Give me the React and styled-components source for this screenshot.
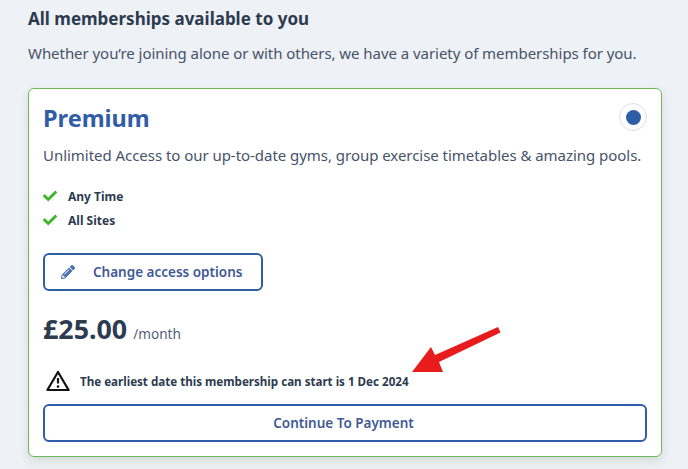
import styled, { createGlobalStyle } from "styled-components"
import { FaCheck, FaPencilAlt } from "react-icons/fa"

const GlobalStyle = createGlobalStyle`
    html, body {
        margin: 0;
        padding: 0;
        height: 100%;
        background: #eef1f5;
        overflow: hidden;
    }
    body {
        font-family: "Noto Sans", "Open Sans", sans-serif;
        color: #2f3e55;
    }
`
const Page = styled.div`
    position: relative;
    width: 688px;
    height: 469px;
    padding: 9px 26px 0 28px;
    box-sizing: border-box;
`
const Heading = styled.h2`
    margin: 0;
    font-size: 17px;
    line-height: 20px;
    font-weight: 700;
    color: #2d3b50;
`
const Intro = styled.p`
    margin: 14px 0 0;
    font-size: 15px;
    line-height: 21px;
    letter-spacing: -0.05px;
    color: #46536a;
`
const Card = styled.div`
    margin-top: 24px;
    height: 369px;
    box-sizing: border-box;
    padding: 14px 14px 0;
    background: #fff;
    border: 1.5px solid #6fba58;
    border-radius: 6px;
    box-shadow: 0 4px 10px rgba(60, 110, 70, 0.16);
`
const CardTop = styled.div`
    display: flex;
    justify-content: space-between;
    align-items: flex-start;
`
const Title = styled.h3`
    margin: 0;
    font-size: 23.5px;
    line-height: 30px;
    font-weight: 700;
    color: #2f5da6;
`
const Radio = styled.span`
    display: flex;
    align-items: center;
    justify-content: center;
    width: 28px;
    height: 28px;
    box-sizing: border-box;
    border: 1px solid #dcdfe6;
    border-radius: 50%;
    &::after {
        content: "";
        width: 15px;
        height: 15px;
        border-radius: 50%;
        background: #2f5da6;
    }
`
const Description = styled.p`
    margin: 12px 0 0;
    font-size: 15px;
    line-height: 21px;
    letter-spacing: -0.04px;
    color: #46536a;
`
const Features = styled.ul`
    list-style: none;
    margin: 21px 0 0;
    padding: 0;
    display: flex;
    flex-direction: column;
    gap: 6px;
`
const Feature = styled.li`
    display: flex;
    align-items: center;
    gap: 11px;
    height: 18px;
    font-size: 12px;
    font-weight: 700;
    color: #2d3b50;
    svg {
        width: 14px;
        height: 14px;
        color: #3cb527;
    }
`
const OutlineButton = styled.button`
    display: flex;
    align-items: center;
    justify-content: ${(p) => (p.$wide ? "center" : "flex-start")};
    width: ${(p) => (p.$wide ? "100%" : "220px")};
    height: 38px;
    padding: ${(p) => (p.$wide ? "0 3px 0 0" : "0 0 0 16px")};
    margin-top: ${(p) => p.$top}px;
    background: #fff;
    border: 2px solid #2f5da6;
    border-radius: 6px;
    font-family: inherit;
    font-size: 13.5px;
    font-weight: 600;
    color: #3f5a94;
    svg {
        width: 14px;
        height: 14px;
        margin-right: 18px;
        color: #4a70b0;
    }
`
const PriceRow = styled.div`
    display: flex;
    align-items: baseline;
    gap: 6px;
    margin-top: 21px;
`
const Price = styled.span`
    font-size: 26.8px;
    line-height: 34px;
    font-weight: 700;
    color: #2d3b50;
`
const Period = styled.span`
    font-size: 13.6px;
    color: #55617a;
`
const Notice = styled.div`
    display: flex;
    align-items: center;
    gap: 10px;
    margin: 24px 0 0 3px;
    height: 22px;
    font-size: 11.6px;
    font-weight: 700;
    color: #2d3b50;
`
const Arrow = styled.svg`
    position: absolute;
    left: 400px;
    top: 320px;
    width: 110px;
    height: 70px;
`

const WarningIcon = () => (
    <svg width="24" height="22" viewBox="0 0 24 22" fill="none">
        <path d="M12 2 L22.6 20 H1.4 Z" stroke="#111" strokeWidth="2.2" strokeLinejoin="round" />
        <path d="M12 8 V13.5" stroke="#111" strokeWidth="2.2" />
        <circle cx="12" cy="16.6" r="1.3" fill="#111" />
    </svg>
)

const App = () => {
    return (
        <Page>
            <GlobalStyle />
            <Heading>All memberships available to you</Heading>
            <Intro>Whether you’re joining alone or with others, we have a variety of memberships for you.</Intro>
            <Card>
                <CardTop>
                    <Title>Premium</Title>
                    <Radio />
                </CardTop>
                <Description>Unlimited Access to our up-to-date gyms, group exercise timetables &amp; amazing pools.</Description>
                <Features>
                    <Feature><FaCheck />Any Time</Feature>
                    <Feature><FaCheck />All Sites</Feature>
                </Features>
                <OutlineButton $top={24}><FaPencilAlt />Change access options</OutlineButton>
                <PriceRow>
                    <Price>£25.00</Price>
                    <Period>/month</Period>
                </PriceRow>
                <Notice><WarningIcon />The earliest date this membership can start is 1 Dec 2024</Notice>
                <OutlineButton $wide $top={12}>Continue To Payment</OutlineButton>
            </Card>
            <Arrow viewBox="0 0 110 70">
                <path d="M98 7 L35 35 L31 27 L12 52 L43 52 L39 42 L100.5 12.5 Z" fill="#e81c1c" />
            </Arrow>
        </Page>
    )
}

export default App
